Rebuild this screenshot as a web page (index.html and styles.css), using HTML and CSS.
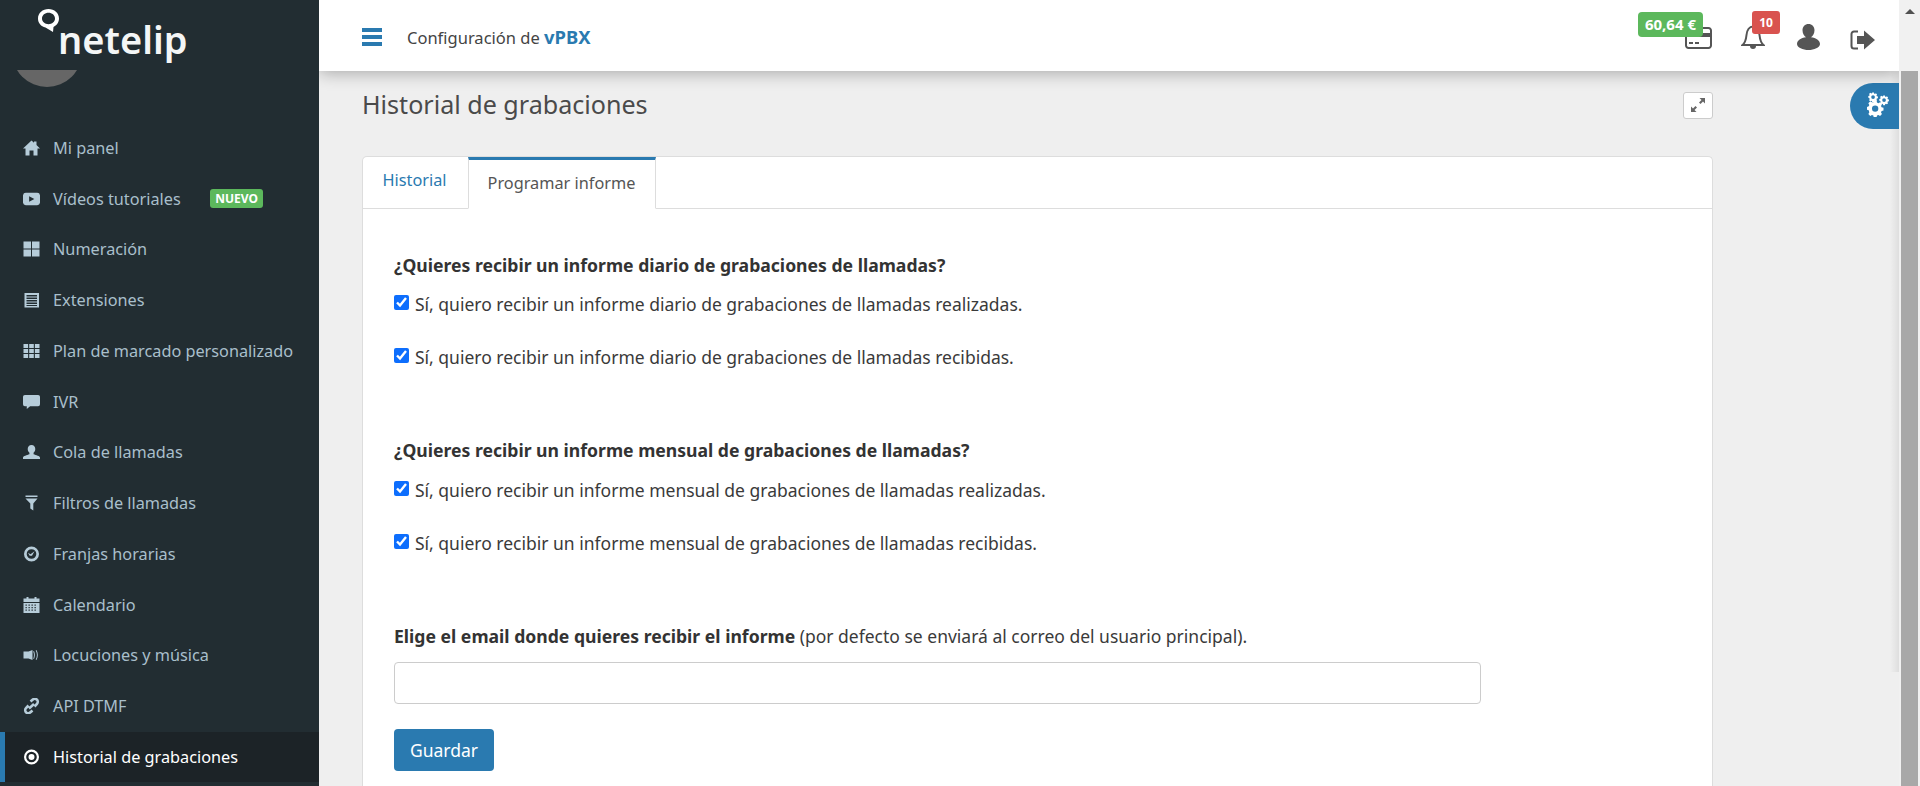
FILE: index.html
```html
<!DOCTYPE html>
<html lang="es">
<head>
<meta charset="utf-8">
<title>Historial de grabaciones</title>
<link rel="stylesheet" href="styles.css">
</head>
<body>
<div class="app">
  <aside class="sidebar">
    <div class="logo">
      <svg class="logo-pin" viewBox="0 0 21 23"><path fill-rule="evenodd" d="M10.500 0C16.300 0 21 4 21 9.500c0 4-2.500 7-5.500 8.500L15 23 7.500 18.500C3 17.500 0 14 0 9.500 0 4 4.700 0 10.500 0zm0 3.800c-3.500 0-6.500 2.400-6.500 5.700s3 5.700 6.500 5.700 6.500-2.400 6.500-5.700-3-5.700-6.500-5.700z"/></svg>
      <span class="logo-text">netelip</span>
    </div>
    <div class="avatar-clip"><div class="avatar"></div></div>
    <nav class="menu">
      <a class="item"><svg class="ic" viewBox="0.500 0.500 17 15"><path d="M9 .5.5 8.500h2.500V15.500h4v-5h4v5h4V8.500h2.500L14 5V1.500h-2.500v1.200z"/></svg><span>Mi panel</span></a>
      <a class="item"><svg class="ic" viewBox="0 1 18 14"><path fill-rule="evenodd" d="M3 1.500h12a3 3 0 0 1 3 2.500v8a3 3 0 0 1-3 2.500H3A3 3 0 0 1 0 12V4a3 3 0 0 1 3-2.500zM6.500 5v6l5.500-3z"/></svg><span>Vídeos tutoriales</span><b class="new">NUEVO</b></a>
      <a class="item"><svg class="ic" viewBox="0 0 16 16"><path d="M0 .5h7.500V7.500H0zM8.500 .5H16V7.500H8.500zM0 8.500h7.500v7H0zM8.500 8.500H16v7H8.500z"/></svg><span>Numeración</span></a>
      <a class="item"><svg class="ic" viewBox="0 0 16 16"><path fill-rule="evenodd" d="M1 1h14.500v14.500H1zM3 3v1.500h10.500V3zM3 5.500V7h10.500V5.500zM3 8v1.500h10.500V8zM3 10.500V12h10.500v-1.500zM3 13v1h10.500v-1z"/></svg><span>Extensiones</span></a>
      <a class="item"><svg class="ic" viewBox="0 0 16 16"><path d="M0 1h4.600v4H0zM5.700 1h4.600v4H5.700zM11.400 1H16v4h-4.600zM0 6h4.600v4H0zM5.700 6h4.600v4H5.700zM11.400 6H16v4h-4.600zM0 11h4.600v4H0zM5.700 11h4.600v4H5.700zM11.400 11H16v4h-4.600z"/></svg><span>Plan de marcado personalizado</span></a>
      <a class="item"><svg class="ic" viewBox="0 0 18 16"><path d="M2 .5h14a2 2 0 0 1 2 2v8a2 2 0 0 1-2 2H7.500L4 15.500V12.500H2a2 2 0 0 1-2-2v-8a2 2 0 0 1 2-2z"/></svg><span>IVR</span></a>
      <a class="item"><svg class="ic" viewBox="0 0 18 16"><path d="M9 .5c2.600 0 4 2 4 4.300 0 1.700-.8 3.200-1.800 4v1.500c2.500 1 6.800 1.800 6.800 3.700v1.500H0V14c0-2 4.300-2.700 6.800-3.700V8.800C5.800 8 5 6.500 5 4.800 5 2.500 6.400.5 9 .5z"/></svg><span>Cola de llamadas</span></a>
      <a class="item"><svg class="ic" viewBox="0 0 16 16"><path d="M2 .5h12v1.500H2zM2 3.500h12L9.800 8.500v7L6.800 13.500v-5z"/></svg><span>Filtros de llamadas</span></a>
      <a class="item"><svg class="ic" viewBox="0 0 16 16"><path fill-rule="evenodd" d="M8 .5a7.500 7.500 0 1 1 0 15 7.500 7.500 0 0 1 0-15zM8 3.200a4.800 4.800 0 1 0 0 9.600A4.800 4.800 0 0 0 8 3.200zM4.500 6.800 7 8.300 11 5.200 8.500 9.800H6.200z"/></svg><span>Franjas horarias</span></a>
      <a class="item"><svg class="ic" viewBox="0 0 16 16"><path fill-rule="evenodd" d="M3 0h2v1.500h6V0h2v1.500h3V5H0V1.500h3zM0 6h16v10H0zM2 7.500v1.200h1.300V7.500zM5 7.500v1.200h1.300V7.500zM8 7.500v1.200h1.300V7.500zM11 7.500v1.200h1.300V7.500zM2 10v1.200h1.300V10zM5 10v1.200h1.300V10zM8 10v1.200h1.300V10zM11 10v1.200h1.300V10zM2 12.500v1.200h1.300v-1.200zM5 12.500v1.200h1.300v-1.200zM8 12.500v1.200h1.300v-1.200zM11 12.500v1.200h1.300v-1.200z"/></svg><span>Calendario</span></a>
      <a class="item"><svg class="ic" viewBox="0 0 16 16"><path d="M0 4.500h5l4-1.500v10L5 11.500H0zM10.500 4c1.200 2.500 1.200 5.500 0 8l-.8-.4c1-2.200 1-5 0-7.200zM13 3c1.800 3 1.800 7 0 10l-.8-.4c1.600-2.800 1.600-6.400 0-9.200z"/></svg><span>Locuciones y música</span></a>
      <a class="item"><svg class="ic ic-line" viewBox="0 0 16 16"><path d="M7 3.500 9 1.800a3 3 0 0 1 4.500 4L11 8.500M10.500 6 5.500 10.500M9 12.500 7 14.200a3 3 0 0 1-4.500-4L5 7.500"/></svg><span>API DTMF</span></a>
      <a class="item active"><svg class="ic" viewBox="0 0 16 16"><path fill-rule="evenodd" d="M8 .5a7.500 7.500 0 1 1 0 15 7.500 7.500 0 0 1 0-15zM8 2.700a5.300 5.300 0 1 0 0 10.600A5.300 5.300 0 0 0 8 2.700zM8 5a3 3 0 1 1 0 6 3 3 0 0 1 0-6z"/></svg><span>Historial de grabaciones</span></a>
    </nav>
  </aside>

  <div class="main">
    <header class="topbar">
      <div class="top-left">
        <div class="burger"><i></i><i></i><i></i></div>
        <p class="top-title">Configuración de <strong>vPBX</strong></p>
      </div>
      <div class="top-right">
        <div class="tool tool-card">
          <svg viewBox="0 0 27 22"><path class="st" d="M1 3.500a2.500 2.500 0 0 1 2.500-2.500h20a2.500 2.500 0 0 1 2.500 2.500v15a2.500 2.500 0 0 1-2.500 2.500h-20A2.500 2.500 0 0 1 1 18.500z"/><path d="M1 6h25v4H1zM4 15h4v2H4zM10 15h4v2h-4z"/></svg>
          <span class="balance">60,64 €</span>
        </div>
        <div class="tool tool-bell">
          <svg viewBox="0 0 24 24"><path class="st" d="M1.500 20c3-2.500 3.500-5 4-10C6 5 8.500 1.500 12 1.500S18 5 18.500 10c.5 5 1 7.500 4 10z"/><path d="M9 21h6a3 3 0 0 1-6 0z"/></svg>
          <span class="count">10</span>
        </div>
        <div class="tool tool-user">
          <svg viewBox="0 0 23 26"><path d="M11.500 0c3.500 0 6 2.600 6 6.200 0 3.400-2 6-3.500 7 5 .8 9 3 9 6.800 0 3.500-6 6-11.500 6S0 23.500 0 20c0-3.800 4-6 9-6.800-1.500-1-3.500-3.600-3.500-7C5.500 2.600 8 0 11.500 0z"/></svg>
        </div>
        <div class="tool tool-exit">
          <svg viewBox="0 0 25 20"><path class="st" d="M8 1.500H4A2.500 2.500 0 0 0 1.500 4v12A2.500 2.500 0 0 0 4 18.500h4"/><path d="M7 6h7V.5L25 10 14 19.500V14H7z"/></svg>
        </div>
      </div>
    </header>

    <div class="edge-shadow"></div>

    <div class="gear-tab">
      <svg viewBox="0 0 24 26">
        <defs><path id="gear" fill-rule="evenodd" d="M7 0h3l.4 2 1.500.7 1.700-1 2 2-1 1.800.6 1.500 2 .4v3l-2 .4-.6 1.500 1 1.700-2 2-1.700-1-1.500.6-.4 2H7l-.4-2-1.500-.6-1.700 1-2-2 1-1.700L1.800 10 0 9.600v-3L1.800 6l.6-1.500-1-1.800 2-2 1.700 1L6.600 2zM8.500 5a3.300 3.300 0 1 0 0 6.600 3.300 3.300 0 0 0 0-6.600z"/></defs>
        <use href="#gear" transform="translate(1 9.600) scale(.96)"/>
        <use href="#gear" transform="translate(2.300 1.400) scale(.56)"/>
        <use href="#gear" transform="translate(13.300 4.400) scale(.56)"/>
      </svg>
    </div>

    <div class="scrollbar">
      <div class="scroll-up"></div>
      <div class="scroll-thumb"></div>
    </div>

    <section class="content">
      <div class="title-row">
        <h1>Historial de grabaciones</h1>
        <button class="expand" type="button">
          <svg viewBox="0 0 16 16"><path d="M9.500 1H15v5.500l-2-2L10.500 7 9 5.500 11.500 3zM1 15V9.500l2 2L5.500 9 7 10.500 4.500 13 6.500 15z"/></svg>
        </button>
      </div>
      <div class="card">
        <div class="tabs">
          <a class="tab">Historial</a>
          <a class="tab tab-active">Programar informe</a>
        </div>
        <form class="panel">
          <p class="q">¿Quieres recibir un informe diario de grabaciones de llamadas?</p>
          <label class="check"><input type="checkbox" checked><span>Sí, quiero recibir un informe diario de grabaciones de llamadas realizadas.</span></label>
          <label class="check"><input type="checkbox" checked><span>Sí, quiero recibir un informe diario de grabaciones de llamadas recibidas.</span></label>
          <p class="q q-next">¿Quieres recibir un informe mensual de grabaciones de llamadas?</p>
          <label class="check"><input type="checkbox" checked><span>Sí, quiero recibir un informe mensual de grabaciones de llamadas realizadas.</span></label>
          <label class="check"><input type="checkbox" checked><span>Sí, quiero recibir un informe mensual de grabaciones de llamadas recibidas.</span></label>
          <p class="email-label"><strong>Elige el email donde quieres recibir el informe</strong> (por defecto se enviará al correo del usuario principal).</p>
          <input class="email" type="text">
          <button class="save" type="button">Guardar</button>
        </form>
      </div>
    </section>
  </div>
</div>
</body>
</html>
```

FILE: styles.css
```css
* { box-sizing: border-box; }
html, body { margin: 0; height: 100%; overflow: hidden; }
body { font-family: "Noto Sans", sans-serif; font-size: 17.5px; color: #3a3a3a; background: #efefef; }
.app { display: flex; height: 786px; overflow: hidden; }

.sidebar { width: 319px; flex: none; background: #222d32; color: #a9bfcb; }
.logo { position: relative; height: 70px; }
.logo-pin { position: absolute; left: 38px; top: 9px; width: 21px; height: 23px; fill: #fff; }
.logo-text { position: absolute; left: 58px; top: 11px; font-size: 38px; line-height: 56px; font-weight: 600; color: #f4f6f6; }
.avatar-clip { height: 17px; overflow: hidden; }
.avatar { width: 70px; height: 70px; margin: -53px 0 0 12px; border-radius: 50%; background: #666; }
.menu { margin-top: 35.500px; }
.item { display: flex; align-items: center; height: 50.750px; border-left: 5px solid transparent; padding-left: 18px; font-size: 16.250px; white-space: nowrap; }
.ic { width: 17px; height: 16px; margin-right: 13px; flex: none; fill: #b6ccd9; }
.ic-line { fill: none; stroke: #b6ccd9; stroke-width: 2.600; }
.new { margin-left: 29px; padding: 0 5.500px; height: 19px; line-height: 19px; border-radius: 3px; background: #5cb85c; color: #fff; font-size: 12px; font-weight: 700; }
.active { background: #1c2327; border-left-color: #2a7ab0; color: #fff; }
.active .ic { fill: #fff; }

.main { position: relative; flex: 1; min-width: 0; display: flex; flex-direction: column; overflow: hidden; }
.topbar { position: relative; z-index: 2; flex: none; height: 71px; margin-right: 21px; padding: 0 0 0 43px; display: flex; align-items: center; justify-content: space-between; background: #fff; box-shadow: 0 2px 16px rgba(0,0,0,.3); }
.top-left { display: flex; align-items: center; padding-top: 3px; }
.burger { width: 20px; display: flex; flex-direction: column; gap: 3px; margin-right: 25px; }
.burger i { display: block; height: 4px; background: #2a7ab0; }
.top-title { margin: -1px 0 0; font-size: 16.500px; color: #444; }
.top-title strong { font-size: 18.400px; color: #2a7ab0; }
.top-right { display: flex; align-items: flex-start; height: 71px; }
.tool { position: relative; fill: #555; }
.tool svg { display: block; }
.st { fill: none; stroke: #555; stroke-width: 2; }
.tool-card { width: 27px; margin-top: 27px; }
.tool-card svg { width: 27px; height: 22px; }
.tool-bell { width: 24px; margin: 25px 0 0 29px; }
.tool-bell svg { width: 24px; height: 24px; }
.tool-user { width: 23px; margin: 24px 0 0 32px; }
.tool-user svg { width: 23px; height: 26px; }
.tool-exit { width: 25px; margin: 30px 24px 0 30px; }
.tool-exit svg { width: 25px; height: 20px; }
.balance { position: absolute; right: 9px; top: -15px; height: 25px; line-height: 25px; padding: 0 7px; border-radius: 4px; background: #5cb85c; color: #fff; font-size: 15px; font-weight: 700; white-space: nowrap; }
.count { position: absolute; left: 11px; top: -14px; width: 28px; height: 23px; line-height: 23px; text-align: center; border-radius: 3px; background: #d9534f; color: #fff; font-size: 12px; font-weight: 700; }

.edge-shadow { position: absolute; z-index: 1; right: 21px; top: 71px; width: 9px; height: 601px; background: linear-gradient(to right, rgba(0,0,0,0), rgba(0,0,0,.07)); }
.gear-tab { position: absolute; z-index: 1; right: 21px; top: 83px; width: 49px; height: 46px; padding: 0 0 4px 16px; border-radius: 23px 0 0 23px; background: #2a7ab0; display: flex; align-items: center; fill: #fff; }
.gear-tab svg { width: 24px; height: 26px; }
.scrollbar { position: absolute; z-index: 3; right: 0; top: 0; bottom: 0; width: 21px; background: #f1f1f1; }
.scroll-up { width: 0; margin: 9px auto 0; border: 5px solid transparent; border-top: 0; border-bottom: 5px solid #505050; }
.scroll-thumb { position: absolute; left: 2px; right: 2px; top: 71px; bottom: 0; background: #a8a8a8; }

.content { flex: 1; padding: 0 207px 0 43px; }
.title-row { display: flex; align-items: center; justify-content: space-between; height: 34px; margin-top: 17px; }
h1 { margin: -3px 0 0; font-size: 25.100px; font-weight: 400; color: #4a4a4a; }
.expand { width: 30px; height: 27px; padding: 0; display: flex; align-items: center; justify-content: center; background: #fff; border: 1px solid #ccc; border-radius: 3px; }
.expand svg { width: 16px; height: 16px; fill: #666; }
.card { margin-top: 34px; background: #fff; border: 1px solid #ddd; border-bottom: 0; border-radius: 5px 5px 0 0; min-height: 700px; }
.tabs { display: flex; height: 52px; border-bottom: 1px solid #ddd; }
.tab { height: 52px; padding: 12px 21.500px 0 19.500px; font-size: 16.300px; color: #2a7ab0; }
.tab-active { padding: 12px 19.500px 0 18.500px; border: 1px solid #ddd; border-top: 3px solid #2a7ab0; border-bottom: 1px solid #fff; background: #fff; color: #555; }
.panel { padding: 44px 30px 0 31px; }
.q { margin: 0 0 14.500px; line-height: 24px; font-size: 17.600px; font-weight: 700; color: #333; }
.q-next { margin: 69.500px 0 15.500px; }
.check { display: flex; align-items: flex-start; height: 24px; margin-bottom: 29px; line-height: 24px; color: #3a3a3a; }
.check input { width: 15px; height: 15px; margin: 3px 6px 0 0; accent-color: #0d6efd; }
.email-label { margin: 69.500px 0 0; line-height: 24px; }
.email-label strong { font-size: 17.600px; color: #333; }
.email { display: block; width: 1087px; height: 42px; margin-top: 14px; border: 1px solid #ccc; border-radius: 4px; background: #fff; }
.save { display: block; width: 100px; height: 42px; margin-top: 25px; border: 0; border-radius: 4px; background: #2a7ab0; color: #fff; font: 17.500px "Noto Sans", sans-serif; }
```
